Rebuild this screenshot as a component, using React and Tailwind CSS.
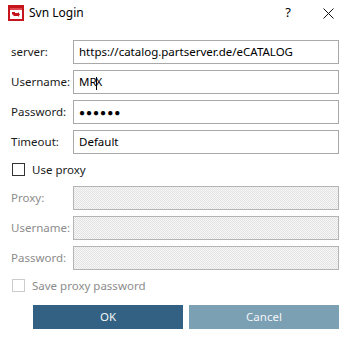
import React from 'react';

const font = { fontFamily: '"Noto Sans", "Open Sans", sans-serif' };

const disabledBg =
  'bg-[repeating-conic-gradient(#e2e2e2_0_25%,#f7f7f7_0_50%)] bg-[length:2px_2px]';

const Field = ({ label, value, disabled }) => (
  <div className="flex items-center h-[24px]">
    <span className={`w-[62px] shrink-0 ${disabled ? 'text-[#8c8c8c]' : 'text-[#1a1a1a]'}`}>{label}</span>
    <div
      className={`flex-1 h-full flex items-center px-[5px] border ${
        disabled ? `border-[#b4b4b4] ${disabledBg}` : 'border-[#a9a9a9] bg-white'
      }`}
    >
      {value}
    </div>
  </div>
);

const Checkbox = ({ label, disabled }) => (
  <div className="flex items-center h-[13px]">
    <span
      className={`w-[13px] h-[13px] border ${disabled ? 'border-[#cccccc]' : 'border-[#333333]'} bg-white`}
    />
    <span className={`ml-[7px] ${disabled ? 'text-[#8c8c8c]' : 'text-[#1a1a1a]'}`}>{label}</span>
  </div>
);

const SvnIcon = () => (
  <svg width="16" height="16" viewBox="0 0 16 16">
    <rect x="0" y="0" width="16" height="16" fill="#c4161c" />
    <rect x="2" y="3" width="12" height="11" fill="#ffffff" />
    <rect x="2" y="3" width="12" height="2" fill="#e04a4f" />
    <path d="M4 7 L7 7 L7 8 L10 8 L10 7 L12 9.5 L10 12 L10 11 L6 11 L4 9 Z" fill="#c4161c" />
  </svg>
);

const App = () => {
  return (
    <div className="w-[350px] h-[339px] bg-white text-[11.5px] overflow-hidden" style={font}>
      {/* title bar */}
      <div className="h-[26px] flex items-center pl-[8px] pr-[16px]">
        <SvnIcon />
        <span className="ml-[5px] text-[12px] text-black">Svn Login</span>
        <span className="ml-auto mr-[32px] text-[13px] text-black">?</span>
        <svg width="11" height="11" viewBox="0 0 11 11">
          <path d="M0.5 0.5 L10.5 10.5 M10.5 0.5 L0.5 10.5" stroke="#111" strokeWidth="1" />
        </svg>
      </div>

      <div className="px-[11px] pt-[14px] flex flex-col gap-[6px]">
        <Field label="server:" value="https://catalog.partserver.de/eCATALOG" />
        <Field
          label="Username:"
          value={
            <span>
              MR<span className="inline-block w-px h-[13px] bg-black align-middle -mx-[1px]" />X
            </span>
          }
        />
        <Field label="Password:" value={<span className="text-[10px] tracking-[1px]">●●●●●●</span>} />
        <Field label="Timeout:" value="Default" />
      </div>

      <div className="px-[12px] mt-[9px]">
        <Checkbox label="Use proxy" />
      </div>

      <div className="px-[11px] mt-[10px] flex flex-col gap-[6px]">
        <Field label="Proxy:" disabled />
        <Field label="Username:" disabled />
        <Field label="Password:" disabled />
      </div>

      <div className="px-[12px] mt-[9px]">
        <Checkbox label="Save proxy password" disabled />
      </div>

      <div className="flex gap-[6px] pl-[33px] pr-[11px] mt-[13px]">
        <button className="flex-1 h-[24px] bg-[#336183] text-[#f2f5f7]">OK</button>
        <button className="flex-1 h-[24px] bg-[#7b9fb3] text-[#f2f5f7]">Cancel</button>
      </div>
    </div>
  );
};

export default App;
